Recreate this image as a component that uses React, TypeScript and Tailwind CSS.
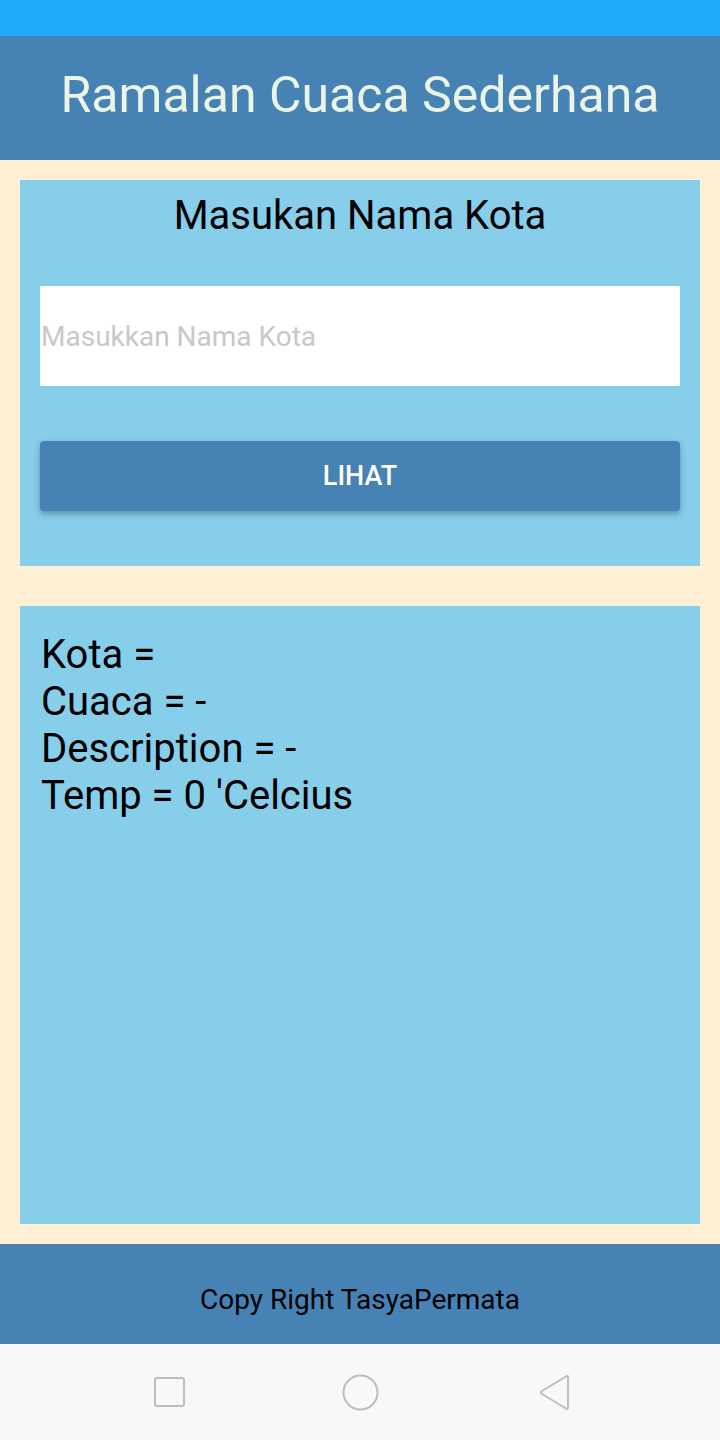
import { useState } from "react";

const results = [
  { label: "Kota", value: "" },
  { label: "Cuaca", value: "-" },
  { label: "Description", value: "-" },
  { label: "Temp", value: "0 'Celcius" },
];

function NavBar() {
  return (
    <div className="h-[96px] bg-[#f8f8f8] flex items-center pl-[154px]">
      <svg width="32" height="31" viewBox="0 0 32 31">
        <rect x="1" y="1" width="29" height="28" rx="2" fill="none" stroke="#bdbdbd" strokeWidth="2" />
      </svg>
      <svg className="ml-[156px]" width="37" height="37" viewBox="0 0 37 37">
        <circle cx="18.5" cy="18.5" r="17" fill="none" stroke="#bdbdbd" strokeWidth="2" />
      </svg>
      <svg className="ml-[160px]" width="32" height="37" viewBox="0 0 32 37">
        <path d="M29 3.5 L29 33.5 Q29 36 27 34.5 L3 20 Q1 18.5 3 17 L27 2.5 Q29 1 29 3.5 Z" fill="none" stroke="#bdbdbd" strokeWidth="2" strokeLinejoin="round" />
      </svg>
    </div>
  );
}

export default function App() {
  const [city, setCity] = useState("");

  return (
    <div className="w-[720px] h-[1440px] flex flex-col font-['Roboto',sans-serif]">
      <div className="h-9 bg-[#1dacf5]" />
      <header className="h-[124px] bg-[#4682b4] flex items-center justify-center pb-[6px]">
        <h1 className="text-[50px] text-[#eaf5e6] leading-none">Ramalan Cuaca Sederhana</h1>
      </header>

      <main className="flex-1 bg-[#ffefd5] p-5 flex flex-col gap-10">
        <section className="h-[386px] bg-[#87ceeb] pt-3 px-5 flex flex-col">
          <h2 className="text-[40px] leading-[47px] text-black text-center">Masukan Nama Kota</h2>
          <input
            value={city}
            onChange={(e) => setCity(e.target.value)}
            placeholder="Masukkan Nama Kota"
            className="mt-[47px] h-[100px] bg-white px-px pt-px text-[28px] text-black placeholder:text-[#c8c8c8] outline-none"
          />
          <button className="mt-[55px] h-[70px] rounded bg-[#4682b4] text-white text-[27px] font-medium shadow-[0_3px_6px_rgba(0,0,0,0.3)]">
            LIHAT
          </button>
        </section>

        <section className="flex-1 bg-[#87ceeb] pt-[25px] px-[21px]">
          {results.map((r) => (
            <p key={r.label} className="text-[40px] leading-[47px] text-black">
              {r.label} = {r.value}
            </p>
          ))}
        </section>
      </main>

      <footer className="h-[100px] bg-[#4682b4] flex items-center justify-center pt-3">
        <p className="text-[28px] text-black">Copy Right TasyaPermata</p>
      </footer>
      <NavBar />
    </div>
  );
}
